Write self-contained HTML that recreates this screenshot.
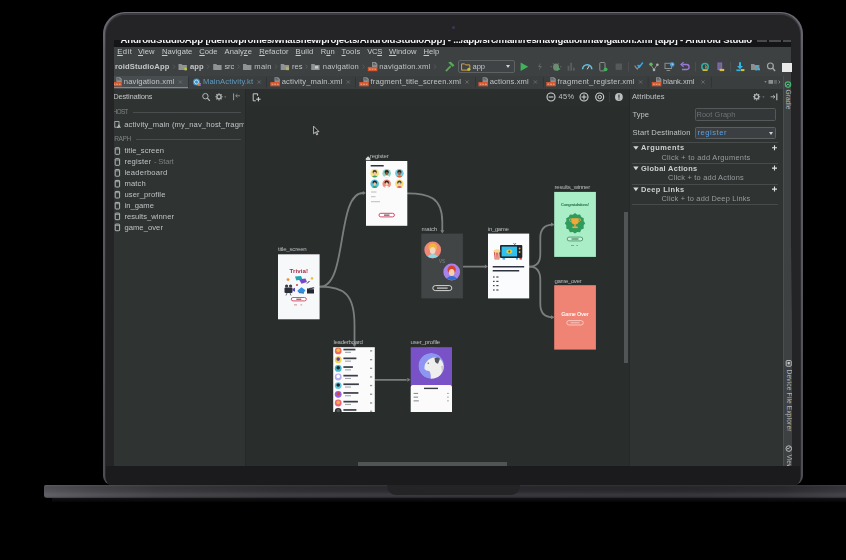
<!DOCTYPE html>
<html><head><meta charset="utf-8"><title>Android Studio</title>
<style>
*{margin:0;padding:0;box-sizing:border-box}
html,body{width:846px;height:560px;overflow:hidden;background:#000000;font-family:"Liberation Sans",sans-serif}
.a{position:absolute}
.t{position:absolute;white-space:pre;line-height:1.24}
.t u{text-decoration-thickness:.6px;text-underline-offset:.8px}
#lid{left:103.4px;top:11.8px;width:699.2px;height:473.2px;border-radius:22px 22px 9px 9px;background:linear-gradient(180deg,#6b6b73 0,#5e5e66 8%,#56565d 55%,#4c4c52 100%)}
#lidmid{left:104.6px;top:13px;width:696.8px;height:472px;border-radius:21px 21px 8.5px 8.5px;background:linear-gradient(180deg,#3c3c41 0,#34343a 10%,#2c2c30 60%,#29292d 100%)}
#lidin{left:106.2px;top:14.8px;width:693.4px;height:471px;border-radius:19.5px 19.5px 8px 8px;background:#242426}
#bez{left:106px;top:466px;width:693.6px;height:20px;background:#1b1b1d;border-radius:0 0 8px 8px}
#base{left:44px;top:485.3px;width:802px;height:13px;border-radius:1.5px 0 0 3px;background:linear-gradient(180deg,rgba(255,255,255,.05) 0,rgba(0,0,0,.08) 15%,rgba(255,255,255,.0) 45%,rgba(255,255,255,.07) 75%,rgba(255,255,255,.05) 88%,rgba(0,0,0,.2) 100%),linear-gradient(90deg,#55555b 0,#47474c 6%,#3a3a3e 14%,#303034 30%,#2b2b2f 50%,#29292d 80%,#2c2c30 92%,#37373d 100%)}
#base2{left:52px;top:498.3px;width:794px;height:3.5px;background:linear-gradient(180deg,#131315,#040405)}
#notch{left:387px;top:485.3px;width:133px;height:9.5px;border-radius:0 0 9px 9px;background:#242427}
#cam{left:451.5px;top:26px;width:3px;height:3px;border-radius:50%;background:#3d3558}
#scr{left:0;top:0;width:846px;height:560px;clip-path:inset(40px 54px 94px 114px)}
#scrin{position:absolute;left:0;top:0;width:846px;height:560px;filter:blur(.32px)}
.r{position:absolute}
svg{position:absolute;overflow:visible}

</style></head>
<body>
<div class="a" id="lid"></div>
<div class="a" id="lidmid"></div>
<div class="a" id="lidin"></div>
<div class="a" id="bez"></div>
<div class="a" id="base2"></div>
<div class="a" id="base"></div>
<div class="a" id="notch"></div>
<div class="a" id="cam"></div>
<div class="a" id="scr"><div id="scrin">
  <!-- backgrounds -->
  <div class="r" style="left:114px;top:40px;width:681px;height:6.5px;background:#141516"></div>
  <div class="r" style="left:114px;top:46.5px;width:681px;height:42px;background:#3d4142"></div>
  <div class="r" style="left:114px;top:76px;width:681px;height:12.5px;background:#3a3e3f"></div>
  <div class="r" style="left:114px;top:76px;width:74px;height:12.5px;background:#484d4f"></div>
  <div class="r" style="left:114px;top:86.6px;width:74px;height:1.6px;background:#4a9ac6"></div>
  <!-- editor toolbar row + canvas -->
  <div class="r" style="left:114px;top:88.5px;width:681px;height:378px;background:#292d2c"></div>
  <div class="r" style="left:245px;top:88.5px;width:385px;height:17.5px;background:#2a2e2d"></div>
  <!-- left panel -->
  <div class="r" style="left:114px;top:88.5px;width:131px;height:378px;background:#2f3332"></div>
  <div class="r" style="left:244.5px;top:88.5px;width:1px;height:378px;background:#262928"></div>
  <!-- right panel -->
  <div class="r" style="left:629.5px;top:88.5px;width:154px;height:378px;background:#2f3332"></div>
  <div class="r" style="left:629px;top:88.5px;width:1px;height:378px;background:#262928"></div>
  <!-- side toolbar -->
  <div class="r" style="left:782.7px;top:76px;width:12.3px;height:391px;background:#3d4142"></div>
  <div class="r" style="left:782.7px;top:76px;width:.8px;height:391px;background:#4a4e4f"></div>
  <div class="r" style="left:790.8px;top:40px;width:1.2px;height:290px;background:linear-gradient(180deg,#1b1b5e 0,#1b1b5e 70%,rgba(27,27,94,0))"></div>
  <div class="r" style="left:756.5px;top:40px;width:10.5px;height:1.6px;background:#4a4a4a"></div><div class="r" style="left:769px;top:40px;width:12px;height:1.6px;background:#4a4a4a"></div><div class="r" style="left:783px;top:40px;width:8px;height:1.6px;background:#4a4a4a"></div>
  <!-- list separators -->
  <div class="r" style="left:133px;top:112.3px;width:108px;height:.8px;background:#4a4e4f"></div>
  <div class="r" style="left:136px;top:139px;width:105px;height:.8px;background:#4a4e4f"></div>
  <!-- right panel fields -->
  <div class="r" style="left:694.5px;top:108px;width:81.5px;height:13.4px;border:1px solid #55595a;border-radius:1.5px;background:#343738"></div>
  <div class="r" style="left:694.5px;top:127.4px;width:81.5px;height:11.6px;border:1px solid #5b5f60;border-radius:1.5px;background:#3b3f41"></div>
  <div class="r" style="left:769px;top:131.6px;width:0;height:0;border-left:2.3px solid transparent;border-right:2.3px solid transparent;border-top:3.2px solid #d0d3d4"></div>
  <div class="r" style="left:632px;top:142px;width:146px;height:.8px;background:#474b4c"></div>
  <div class="r" style="left:632px;top:162.6px;width:146px;height:.8px;background:#474b4c"></div>
  <div class="r" style="left:632px;top:183.5px;width:146px;height:.8px;background:#474b4c"></div>
  <div class="r" style="left:632px;top:204.4px;width:146px;height:.8px;background:#474b4c"></div>
  <!-- scrollbars -->
  <div class="r" style="left:623.6px;top:212px;width:4px;height:151px;background:#515555"></div>
  <div class="r" style="left:357.7px;top:462.3px;width:149.5px;height:3.6px;background:#505454"></div>
  <!-- app dropdown -->
  <div class="r" style="left:458.3px;top:60.4px;width:56.6px;height:12.8px;border:1px solid #5e6263;border-radius:2px;background:#3f4345"></div>
  <div class="r" style="left:505.5px;top:65.4px;width:0;height:0;border-left:2.4px solid transparent;border-right:2.4px solid transparent;border-top:3.2px solid #cfd2d3"></div>
  <!-- white box at toolbar right -->
  <div class="r" style="left:781.7px;top:63px;width:10.3px;height:8.8px;background:#e9e9e9"></div>
<svg width="846" height="560" viewBox="0 0 846 560" style="left:0;top:0"><path d="M178.5,64.10000000000001 h3 l1,1 h4.4 v5 h-8.4z" fill="#8f9394"/><circle cx="185.6" cy="68.9" r="1.5" fill="#b7c63c"/>
<path d="M213.2,64.10000000000001 h3 l1,1 h4.4 v5 h-8.4z" fill="#8f9394"/>
<path d="M243,64.10000000000001 h3 l1,1 h4.4 v5 h-8.4z" fill="#8f9394"/>
<path d="M280.7,64.10000000000001 h3 l1,1 h4.4 v5 h-8.4z" fill="#8f9394"/><path d="M286,67.3h3M286,68.5h3M286,69.7h3" stroke="#cdbb52" stroke-width=".7"/>
<path d="M311.2,64.10000000000001 h3 l1,1 h4.4 v5 h-8.4z" fill="#8f9394"/><rect x="315" y="66.10000000000001" width="3.2" height="2.4" fill="#c9cccc"/>
<path d="M173.1,64.7l1.8,2l-1.8,2" stroke="#5d6162" stroke-width=".8" fill="none"/>
<path d="M207.1,64.7l1.8,2l-1.8,2" stroke="#5d6162" stroke-width=".8" fill="none"/>
<path d="M237.6,64.7l1.8,2l-1.8,2" stroke="#5d6162" stroke-width=".8" fill="none"/>
<path d="M275.1,64.7l1.8,2l-1.8,2" stroke="#5d6162" stroke-width=".8" fill="none"/>
<path d="M305.6,64.7l1.8,2l-1.8,2" stroke="#5d6162" stroke-width=".8" fill="none"/>
<path d="M362.6,64.7l1.8,2l-1.8,2" stroke="#5d6162" stroke-width=".8" fill="none"/>
<path d="M434.1,64.7l1.8,2l-1.8,2" stroke="#5d6162" stroke-width=".8" fill="none"/>
<path d="M372.0,62.1 h3.6 l1.8,1.8 v3.4 h-5.4z" fill="#8d9192"/><path d="M372.8,63.5h2.2M372.8,64.7h3.4" stroke="#3a3e3f" stroke-width=".6"/><rect x="367.8" y="66.9" width="9.6" height="4.3" fill="#d2562e"/><path d="M369.0,69.10000000000001h1.8M371.7,69.10000000000001h1.8M374.40000000000003,69.10000000000001h1.8" stroke="#f3c9b8" stroke-width=".8"/>
<path d="M116.4,77.2 h3.6 l1.8,1.8 v3.4 h-5.4z" fill="#8d9192"/><path d="M117.2,78.6h2.2M117.2,79.8h3.4" stroke="#3a3e3f" stroke-width=".6"/><rect x="112.2" y="82.0" width="9.6" height="4.3" fill="#d2562e"/><path d="M113.4,84.2h1.8M116.10000000000001,84.2h1.8M118.8,84.2h1.8" stroke="#f3c9b8" stroke-width=".8"/>
<path d="M274.5,77.2 h3.6 l1.8,1.8 v3.4 h-5.4z" fill="#8d9192"/><path d="M275.3,78.6h2.2M275.3,79.8h3.4" stroke="#3a3e3f" stroke-width=".6"/><rect x="270.3" y="82.0" width="9.6" height="4.3" fill="#d2562e"/><path d="M271.5,84.2h1.8M274.2,84.2h1.8M276.90000000000003,84.2h1.8" stroke="#f3c9b8" stroke-width=".8"/>
<path d="M363.4,77.2 h3.6 l1.8,1.8 v3.4 h-5.4z" fill="#8d9192"/><path d="M364.2,78.6h2.2M364.2,79.8h3.4" stroke="#3a3e3f" stroke-width=".6"/><rect x="359.2" y="82.0" width="9.6" height="4.3" fill="#d2562e"/><path d="M360.4,84.2h1.8M363.09999999999997,84.2h1.8M365.8,84.2h1.8" stroke="#f3c9b8" stroke-width=".8"/>
<path d="M482.59999999999997,77.2 h3.6 l1.8,1.8 v3.4 h-5.4z" fill="#8d9192"/><path d="M483.4,78.6h2.2M483.4,79.8h3.4" stroke="#3a3e3f" stroke-width=".6"/><rect x="478.4" y="82.0" width="9.6" height="4.3" fill="#d2562e"/><path d="M479.59999999999997,84.2h1.8M482.29999999999995,84.2h1.8M485.0,84.2h1.8" stroke="#f3c9b8" stroke-width=".8"/>
<path d="M550.4000000000001,77.2 h3.6 l1.8,1.8 v3.4 h-5.4z" fill="#8d9192"/><path d="M551.2,78.6h2.2M551.2,79.8h3.4" stroke="#3a3e3f" stroke-width=".6"/><rect x="546.2" y="82.0" width="9.6" height="4.3" fill="#d2562e"/><path d="M547.4000000000001,84.2h1.8M550.1,84.2h1.8M552.8000000000001,84.2h1.8" stroke="#f3c9b8" stroke-width=".8"/>
<path d="M656.0,77.2 h3.6 l1.8,1.8 v3.4 h-5.4z" fill="#8d9192"/><path d="M656.8,78.6h2.2M656.8,79.8h3.4" stroke="#3a3e3f" stroke-width=".6"/><rect x="651.8" y="82.0" width="9.6" height="4.3" fill="#d2562e"/><path d="M653.0,84.2h1.8M655.6999999999999,84.2h1.8M658.4,84.2h1.8" stroke="#f3c9b8" stroke-width=".8"/>
<circle cx="196.5" cy="82" r="3.6" fill="#3a8fc4"/><circle cx="196.5" cy="82" r="2" fill="none" stroke="#cfe6f5" stroke-width=".9"/><path d="M197.8,83 h3 v3 h-3z" fill="#8a6ad8"/><path d="M197.8,86 l3,-3 h-3z" fill="#e8853a"/>
<path d="M178.8,80.4l3.2,3.2M182.0,80.4l-3.2,3.2" stroke="#6d7172" stroke-width=".8"/>
<path d="M257.59999999999997,80.4l3.2,3.2M260.8,80.4l-3.2,3.2" stroke="#6d7172" stroke-width=".8"/>
<path d="M346.7,80.4l3.2,3.2M349.90000000000003,80.4l-3.2,3.2" stroke="#6d7172" stroke-width=".8"/>
<path d="M465.4,80.4l3.2,3.2M468.6,80.4l-3.2,3.2" stroke="#6d7172" stroke-width=".8"/>
<path d="M533.8,80.4l3.2,3.2M537.0,80.4l-3.2,3.2" stroke="#6d7172" stroke-width=".8"/>
<path d="M639.0,80.4l3.2,3.2M642.2,80.4l-3.2,3.2" stroke="#6d7172" stroke-width=".8"/>
<path d="M701.4,80.4l3.2,3.2M704.6,80.4l-3.2,3.2" stroke="#6d7172" stroke-width=".8"/>
<rect x="188.2" y="77" width=".7" height="10.5" fill="#2f3233"/>
<rect x="266" y="77" width=".7" height="10.5" fill="#2f3233"/>
<rect x="355" y="77" width=".7" height="10.5" fill="#2f3233"/>
<rect x="475" y="77" width=".7" height="10.5" fill="#2f3233"/>
<rect x="543" y="77" width=".7" height="10.5" fill="#2f3233"/>
<rect x="647.8" y="77" width=".7" height="10.5" fill="#2f3233"/>
<rect x="711" y="77" width=".7" height="10.5" fill="#2f3233"/>
<path d="M764.3,81.3h2.4l-1.2,1.4z" fill="#9a9d9e"/><rect x="768.5" y="80" width="4.6" height="3.8" fill="#8b8f90"/><rect x="774" y="80" width="3" height="3.8" fill="#5c6061"/><path d="M778.6,80.6l1.4,1.4l-1.4,1.4" stroke="#9a9d9e" stroke-width=".7" fill="none"/>
<path d="M445.3,70.5 l4.8,-5 l1.2,1.2 l-4.8,5z" fill="#5aa85a"/><path d="M448.2,62.6 l2.6,-0.9 l3.6,3.6 l-1.6,1.6z" fill="#5aa85a"/>
<path d="M461.6,63.900000000000006 h3 l1,1 h4.2 v5.2 h-8.2z" fill="none" stroke="#d9a13c" stroke-width="1"/><circle cx="468.8" cy="69.2" r="1.5" fill="#b7c63c"/>
<path d="M520.6,62.5 v8.4 l7.6,-4.2z" fill="#3fb25b"/>
<path d="M540.8,62.7 l-3,4.4 h2 l-1,3.6 l3.2,-4.6 h-2z" fill="#606465"/>
<ellipse cx="556" cy="67.10000000000001" rx="3" ry="3.6" fill="#6f8a72"/><path d="M553,63.300000000000004l1.4,1.4M559,63.300000000000004l-1.4,1.4M551.8,66.7h-1.2M560.2,66.7h1.2" stroke="#7f8384" stroke-width=".8"/><path d="M557,66.7 v4.4 l3.6,-2.2z" fill="#3fb25b"/>
<rect x="567.6" y="65.7" width="1.8" height="5" fill="#5a5e5f"/><rect x="570.3" y="62.7" width="1.8" height="8" fill="#5a5e5f"/><rect x="573" y="67.7" width="1.8" height="3" fill="#5a5e5f"/>
<path d="M582.6,69.3 a4.6,4.6 0 0 1 9.2,0" fill="none" stroke="#5fc4e6" stroke-width="1.5"/><path d="M587.2,69.3 l2,-3.4" stroke="#d9dcdc" stroke-width="1"/>
<rect x="599.8" y="62.5" width="5.2" height="8.4" rx=".8" fill="none" stroke="#8b8f90" stroke-width="1"/><circle cx="605.6" cy="69.3" r="1.9" fill="#3fb25b"/>
<rect x="615.6" y="63.5" width="6.4" height="6.4" fill="#56595a"/>
<rect x="628" y="62" width=".8" height="9.5" fill="#4e5253"/>
<path d="M634.6,65.7 l2.6,3.4 l3,-4" stroke="#8b8f90" stroke-width="1.2" fill="none"/><path d="M637.6,65.10000000000001 l1.8,2 l3.4,-4.6" stroke="#38a8e8" stroke-width="1.5" fill="none"/>
<path d="M651,65.10000000000001 l3,4.6 l3,-4.6" stroke="#8b8f90" stroke-width="1" fill="none"/><circle cx="651" cy="64.3" r="1.7" fill="#62b95c"/><circle cx="657.4" cy="64.7" r="1.3" fill="#a9adae"/><circle cx="654" cy="69.9" r="1.3" fill="#a9adae"/>
<rect x="665" y="63.300000000000004" width="6.6" height="5.2" fill="none" stroke="#8b8f90" stroke-width="1"/><path d="M666.5,70.5h3.6" stroke="#8b8f90" stroke-width="1"/><circle cx="672.2" cy="64.5" r="2.3" fill="#3f9fe0"/><path d="M672.2,63.300000000000004v1.3h1" stroke="#e8f2fa" stroke-width=".6" fill="none"/>
<path d="M682.4,64.5 h4.2 a2.5,2.5 0 0 1 0,5 h-4.6" stroke="#9a79d8" stroke-width="1.3" fill="none"/><path d="M683.6,62.300000000000004 l-2.6,2.2 l2.6,2.2" stroke="#9a79d8" stroke-width="1.2" fill="none"/>
<rect x="695" y="62" width=".8" height="9.5" fill="#4e5253"/>
<circle cx="705" cy="66.7" r="3.2" fill="none" stroke="#2fb1a6" stroke-width="1.5"/><path d="M702.6,70.3 h5" stroke="#d8c23c" stroke-width="1.3"/><path d="M705,65.5 l1.6,1.4 l-1.6,1.4" stroke="#d8c23c" stroke-width=".9" fill="none"/>
<rect x="717.4" y="62.5" width="4.8" height="7.6" fill="#8a62c8"/><rect x="718.4" y="63.5" width="2.8" height="5" fill="#6e6a80"/><rect x="719.6" y="68.9" width="4.6" height="2.2" fill="#d8c23c"/>
<rect x="730" y="62" width=".8" height="9.5" fill="#4e5253"/>
<path d="M740,62.300000000000004 v4.6" stroke="#2fb6e8" stroke-width="2"/><path d="M737,66.10000000000001 h6 l-3,3.2z" fill="#2fb6e8"/><rect x="736.4" y="69.5" width="4" height="1.6" fill="#2fb6e8"/><rect x="740.8" y="69.10000000000001" width="3.6" height="2" fill="#d8c23c"/>
<path d="M751,64.10000000000001 h3 l1,1 h4.4 v5 h-8.4z" fill="#8b8f90"/><rect x="755.4" y="65.9" width="2" height="2" fill="#3fb0e0"/><rect x="758" y="68.3" width="2" height="2" fill="#3fb0e0"/><rect x="755.4" y="68.9" width="2" height="1.6" fill="#3fb0e0"/>
<circle cx="770.4" cy="65.9" r="2.9" fill="none" stroke="#a4a8a9" stroke-width="1.2"/><path d="M772.5,68.10000000000001 l2.6,2.8" stroke="#a4a8a9" stroke-width="1.4"/>
<circle cx="205.4" cy="96.2" r="2.7" fill="none" stroke="#b4b7b8" stroke-width="1"/><path d="M207.4,98.2 l2.4,2.6" stroke="#b4b7b8" stroke-width="1.2"/>
<circle cx="219" cy="96.8" r="2.1" fill="none" stroke="#b4b7b8" stroke-width="1.3"/><path d="M221.40,96.80L222.60,96.80" stroke="#b4b7b8" stroke-width="1.1"/><path d="M220.70,98.50L221.55,99.35" stroke="#b4b7b8" stroke-width="1.1"/><path d="M219.00,99.20L219.00,100.40" stroke="#b4b7b8" stroke-width="1.1"/><path d="M217.30,98.50L216.45,99.35" stroke="#b4b7b8" stroke-width="1.1"/><path d="M216.60,96.80L215.40,96.80" stroke="#b4b7b8" stroke-width="1.1"/><path d="M217.30,95.10L216.45,94.25" stroke="#b4b7b8" stroke-width="1.1"/><path d="M219.00,94.40L219.00,93.20" stroke="#b4b7b8" stroke-width="1.1"/><path d="M220.70,95.10L221.55,94.25" stroke="#b4b7b8" stroke-width="1.1"/>
<path d="M224.1,96.55h2.2l-1.1,1.3z" fill="#8a8e8f"/>
<path d="M233.6,93.39999999999999 v6.8" stroke="#9a9d9e" stroke-width="1"/><path d="M240,95.8 h-4.2 M237.4,94.2 l-1.8,1.6 l1.8,1.6" stroke="#9a9d9e" stroke-width=".8" fill="none"/>
<path d="M253.2,93.8 h4.4 v2 M253.2,93.8 v7 h2.6" stroke="#d5d8d9" stroke-width=".9" fill="none"/><path d="M258.4,97 v4.4 M256.2,99.2 h4.4" stroke="#d5d8d9" stroke-width="1"/>
<circle cx="551" cy="97" r="4" fill="none" stroke="#d0d3d4" stroke-width="1.1"/>
<circle cx="584" cy="97" r="4" fill="none" stroke="#d0d3d4" stroke-width="1.1"/>
<circle cx="599.7" cy="97" r="4" fill="none" stroke="#d0d3d4" stroke-width="1.1"/>
<path d="M548.6,97h4.8" stroke="#d0d3d4" stroke-width="1.1"/><path d="M581.5,97h5M584,94.5v5" stroke="#d0d3d4" stroke-width="1.1"/><circle cx="599.7" cy="97" r="1.7" fill="none" stroke="#d0d3d4" stroke-width="1"/>
<rect x="609" y="92" width=".8" height="10" fill="#3f4344"/>
<circle cx="618.9" cy="97" r="3.9" fill="#bcbfc0"/><rect x="618.4" y="94.6" width="1.1" height="3.2" fill="#2f3233"/><rect x="618.4" y="98.5" width="1.1" height="1.1" fill="#2f3233"/>
<circle cx="756.6" cy="96.8" r="2.1" fill="none" stroke="#b4b7b8" stroke-width="1.3"/><path d="M759.00,96.80L760.20,96.80" stroke="#b4b7b8" stroke-width="1.1"/><path d="M758.30,98.50L759.15,99.35" stroke="#b4b7b8" stroke-width="1.1"/><path d="M756.60,99.20L756.60,100.40" stroke="#b4b7b8" stroke-width="1.1"/><path d="M754.90,98.50L754.05,99.35" stroke="#b4b7b8" stroke-width="1.1"/><path d="M754.20,96.80L753.00,96.80" stroke="#b4b7b8" stroke-width="1.1"/><path d="M754.90,95.10L754.05,94.25" stroke="#b4b7b8" stroke-width="1.1"/><path d="M756.60,94.40L756.60,93.20" stroke="#b4b7b8" stroke-width="1.1"/><path d="M758.30,95.10L759.15,94.25" stroke="#b4b7b8" stroke-width="1.1"/>
<path d="M762.3,96.55h2.2l-1.1,1.3z" fill="#8a8e8f"/>
<path d="M770.6,96.8 h4.4 M773.2,95.2 l1.8,1.6 l-1.8,1.6" stroke="#c3c6c7" stroke-width=".8" fill="none"/><path d="M776.8,93.6 v6.6" stroke="#c3c6c7" stroke-width="1.1"/>
<path d="M633.1999999999999,146.15h5.4l-2.7,3.7z" fill="#d3d6d7"/>
<path d="M772,147.8h5M774.5,145.3v5" stroke="#dfe1e2" stroke-width="1.1"/>
<path d="M633.1999999999999,166.45h5.4l-2.7,3.7z" fill="#d3d6d7"/>
<path d="M772,168.1h5M774.5,165.6v5" stroke="#dfe1e2" stroke-width="1.1"/>
<path d="M633.1999999999999,187.45h5.4l-2.7,3.7z" fill="#d3d6d7"/>
<path d="M772,189.1h5M774.5,186.6v5" stroke="#dfe1e2" stroke-width="1.1"/>
<rect x="114.8" y="121.6" width="4.2" height="5.6" fill="none" stroke="#b9bcbd" stroke-width=".8"/><path d="M117.4,128 l1.5,-3.2 l1.5,3.2 M118,127 h1.8" stroke="#d5d8d9" stroke-width=".7" fill="none"/>
<rect x="115.2" y="147.7" width="4.4" height="6.6" rx=".7" fill="none" stroke="#c3c6c7" stroke-width=".9"/><path d="M115.4,149h4" stroke="#c3c6c7" stroke-width=".7"/>
<rect x="115.2" y="158.7" width="4.4" height="6.6" rx=".7" fill="none" stroke="#c3c6c7" stroke-width=".9"/><path d="M115.4,160h4" stroke="#c3c6c7" stroke-width=".7"/>
<rect x="115.2" y="169.6" width="4.4" height="6.6" rx=".7" fill="none" stroke="#c3c6c7" stroke-width=".9"/><path d="M115.4,170.9h4" stroke="#c3c6c7" stroke-width=".7"/>
<rect x="115.2" y="180.39999999999998" width="4.4" height="6.6" rx=".7" fill="none" stroke="#c3c6c7" stroke-width=".9"/><path d="M115.4,181.7h4" stroke="#c3c6c7" stroke-width=".7"/>
<rect x="115.2" y="191.39999999999998" width="4.4" height="6.6" rx=".7" fill="none" stroke="#c3c6c7" stroke-width=".9"/><path d="M115.4,192.7h4" stroke="#c3c6c7" stroke-width=".7"/>
<rect x="115.2" y="202.39999999999998" width="4.4" height="6.6" rx=".7" fill="none" stroke="#c3c6c7" stroke-width=".9"/><path d="M115.4,203.7h4" stroke="#c3c6c7" stroke-width=".7"/>
<rect x="115.2" y="213.1" width="4.4" height="6.6" rx=".7" fill="none" stroke="#c3c6c7" stroke-width=".9"/><path d="M115.4,214.4h4" stroke="#c3c6c7" stroke-width=".7"/>
<rect x="115.2" y="224.1" width="4.4" height="6.6" rx=".7" fill="none" stroke="#c3c6c7" stroke-width=".9"/><path d="M115.4,225.4h4" stroke="#c3c6c7" stroke-width=".7"/>
<circle cx="788" cy="84.6" r="2.7" fill="none" stroke="#3fb56a" stroke-width="1.2"/><path d="M786.4,85.6 q1.6,-3 3.4,-0.2" stroke="#9fd8b2" stroke-width=".8" fill="none"/>
<text transform="translate(785.6,89.5) rotate(90)" font-size="6.6" fill="#b4b7b8" font-family="Liberation Sans" textLength="20">Gradle</text>
<rect x="786.2" y="360.6" width="5" height="5.6" rx=".8" fill="none" stroke="#c9cccd" stroke-width=".9"/><rect x="787.6" y="362" width="2.2" height="2.4" fill="#c9cccd"/>
<text transform="translate(786.6,369.5) rotate(90)" font-size="6.6" fill="#b4b7b8" font-family="Liberation Sans" textLength="62">Device File Explorer</text>
<circle cx="788.8" cy="448.6" r="2.8" fill="none" stroke="#c9cccd" stroke-width=".9"/><path d="M788.8,448.6 l1.6,-1.6 M788.8,448.6 h-1.8" stroke="#c9cccd" stroke-width=".8"/>
<text transform="translate(786.6,454.5) rotate(90)" font-size="6.6" fill="#b4b7b8" font-family="Liberation Sans">Viewer</text></svg>
<svg width="846" height="560" viewBox="0 0 846 560" style="left:0;top:0"><g fill="none" stroke="#7a7e7e" stroke-width="1.8" stroke-linecap="round">
<path d="M320,286.7 C348,286.7 336,193 363,193"/>
<path d="M320,286.7 C345,286.7 354.5,295 354.5,325 L354.5,345"/>
<path d="M407.5,193.3 C428,193.3 442.3,197 442.3,222 L442.3,231"/>
<path d="M463.5,266.6 L485,266.6"/>
<path d="M529.5,266.6 C537,266.6 540.3,262 540.3,254 L540.3,238 C540.3,228 545,224.6 553,224.6"/>
<path d="M529.5,266.6 C537,266.6 540.3,272 540.3,280 L540.3,304 C540.3,314 545,317.3 553,317.3"/>
<path d="M375.5,379.8 L406,379.8"/>
</g>
<path d="M362.8,191 L366,193 L362.8,195Z" fill="#7a7e7e"/>
<path d="M440.3,230.3 L442.3,233.5 L444.3,230.3Z" fill="#7a7e7e"/>
<path d="M484.8,264.6 L488,266.6 L484.8,268.6Z" fill="#7a7e7e"/>
<path d="M551.0,222.6 L554.2,224.6 L551.0,226.6Z" fill="#7a7e7e"/>
<path d="M551.0,315.3 L554.2,317.3 L551.0,319.3Z" fill="#7a7e7e"/>
<path d="M407.3,377.8 L410.5,379.8 L407.3,381.8Z" fill="#7a7e7e"/>
<path d="M352.5,343.8 L354.5,347 L356.5,343.8Z" fill="#7a7e7e"/>
<rect x="278" y="254.3" width="41.6" height="65" fill="#f7f8fa"/>
<text x="298.8" y="273.4" font-size="6.2" font-weight="700" fill="#ab2b44" text-anchor="middle" font-family="Liberation Sans" textLength="18.5">Trivia!</text>
<circle cx="288" cy="279.6" r="1.4" fill="#f08a2a"/><circle cx="312" cy="278.4" r="1.3" fill="#f2c43c"/><circle cx="297" cy="285" r="1" fill="#d43b3b"/>
<path d="M295,276.5 l6,-0.5 l1.5,3.2 l-6.2,1.3z" fill="#21a5b5"/><path d="M299,279.5 l6.5,-1 l1.5,3.4 l-5.5,1.8z" fill="#7a49c9"/>
<rect x="284.5" y="287.5" width="8" height="5.5" rx="1" fill="#2c2f3a"/><circle cx="286.6" cy="286" r="1.6" fill="#3a3d48"/><circle cx="290.6" cy="286" r="1.6" fill="#3a3d48"/><path d="M292.5,289 l2.5,-1.3 v4 l-2.5,-1.3z" fill="#5b3fb5"/><path d="M287,293 l-1,2.5 M290,293 l1,2.5" stroke="#2c2f3a" stroke-width=".7"/>
<path d="M297.5,290.5 l4,-3.2 l4,3 l-2,2.8 l-5.5,-0.8z" fill="#2f8fe0"/><path d="M299,292.6 l5,0.6" stroke="#174a8a" stroke-width=".8"/>
<rect x="307" y="289.2" width="7" height="4.3" fill="#24262e"/><path d="M307,288.6 l7,-1.6 l0.3,1.3 l-7,1.6z" fill="#24262e"/><path d="M308.5,288.9l1,-1.2M310.7,288.4l1,-1.2M312.8,287.9l1,-1.2" stroke="#fff" stroke-width=".5"/><path d="M307,283.5 l2.5,-2.5" stroke="#24262e" stroke-width="1"/>
<rect x="291.3" y="297.5" width="15" height="3.4" rx="1.7" fill="#fff" stroke="#d0405e" stroke-width="0.9"/>
<rect x="296.3" y="298.7" width="5" height="1" fill="#7a3040"/><rect x="294" y="304.5" width="3" height=".8" fill="#b77"/><rect x="300.5" y="304.5" width="1.6" height=".8" fill="#b77"/>
<rect x="366" y="161" width="41.3" height="64.8" fill="#fbfbfc"/>
<rect x="370.7" y="165" width="13" height="1.5" fill="#30323a"/>
<circle cx="374.7" cy="173.3" r="4.3" fill="#f6e37f"/><circle cx="374.7" cy="172.10" r="2.15" fill="#3d3a36"/><ellipse cx="374.7" cy="173.52" rx="1.42" ry="1.81" fill="#f0c9a5"/><path d="M372.03,176.65 Q374.7,174.16 377.37,176.65 Q374.7,178.25 372.03,176.65Z" fill="#3aa06a"/>
<circle cx="386.7" cy="173.3" r="4.3" fill="#8ed3c0"/><circle cx="386.7" cy="172.10" r="2.15" fill="#1f1f24"/><ellipse cx="386.7" cy="173.52" rx="1.42" ry="1.81" fill="#8a5a3c"/><path d="M384.03,176.65 Q386.7,174.16 389.37,176.65 Q386.7,178.25 384.03,176.65Z" fill="#fff"/>
<circle cx="399.4" cy="173.3" r="4.3" fill="#6fc9e2"/><circle cx="399.4" cy="172.10" r="2.15" fill="#2a2320"/><ellipse cx="399.4" cy="173.52" rx="1.42" ry="1.81" fill="#a8643f"/><path d="M396.73,176.65 Q399.4,174.16 402.07,176.65 Q399.4,178.25 396.73,176.65Z" fill="#e0623a"/>
<circle cx="374.7" cy="183.8" r="4.3" fill="#58bfdb"/><circle cx="374.7" cy="182.60" r="2.15" fill="#1d1b1f"/><ellipse cx="374.7" cy="184.02" rx="1.42" ry="1.81" fill="#f1c7a0"/><path d="M372.03,187.15 Q374.7,184.66 377.37,187.15 Q374.7,188.75 372.03,187.15Z" fill="#2ea06a"/>
<circle cx="386.7" cy="183.8" r="4.3" fill="#f08d78"/><circle cx="386.7" cy="182.60" r="2.15" fill="#2a2526"/><ellipse cx="386.7" cy="184.02" rx="1.42" ry="1.81" fill="#f6d3b8"/><path d="M384.03,187.15 Q386.7,184.66 389.37,187.15 Q386.7,188.75 384.03,187.15Z" fill="#fff"/>
<circle cx="399.4" cy="183.8" r="4.3" fill="#f7e07c"/><circle cx="399.4" cy="182.60" r="2.15" fill="#4a4140"/><ellipse cx="399.4" cy="184.02" rx="1.42" ry="1.81" fill="#f3cfae"/><path d="M396.73,187.15 Q399.4,184.66 402.07,187.15 Q399.4,188.75 396.73,187.15Z" fill="#e85a5a"/>
<rect x="371" y="191.5" width="5.5" height="1" fill="#b9bcc2"/>
<rect x="371" y="196.2" width="4.5" height="1" fill="#b9bcc2"/>
<rect x="371" y="201.2" width="9" height="1" fill="#b9bcc2"/>
<rect x="379.0" y="213.3" width="15.4" height="3.6" rx="1.8" fill="#ffffff" stroke="#d2486a" stroke-width="1.0"/>
<rect x="384" y="214.6" width="5.5" height="1" fill="#4a3038"/>
<path d="M365.8,158.6 l2.3,-2.4 l2.3,2.4 v1.6 h-4.6z" fill="#d5d8d9"/>
<rect x="421.3" y="233.6" width="41.6" height="64.8" fill="#424545"/>
<circle cx="432.7" cy="250" r="8.4" fill="#ef8a78"/><circle cx="432.7" cy="247.65" r="4.20" fill="#f2b63a"/><ellipse cx="432.7" cy="250.42" rx="2.77" ry="3.53" fill="#f5d7bd"/><path d="M427.49,256.55 Q432.7,251.68 437.91,256.55 Q432.7,259.66 427.49,256.55Z" fill="#8fd6e8"/>
<circle cx="451.7" cy="272" r="8.4" fill="#a983ea"/><circle cx="451.7" cy="269.65" r="4.20" fill="#d9442f"/><ellipse cx="451.7" cy="272.42" rx="2.77" ry="3.53" fill="#f3d0b4"/><path d="M446.49,278.55 Q451.7,273.68 456.91,278.55 Q451.7,281.66 446.49,278.55Z" fill="#2f6fd0"/>
<text x="442" y="262.8" font-size="4.6" fill="#7d8182" text-anchor="middle" font-family="Liberation Sans">VS</text>
<rect x="432.8" y="285.6" width="19" height="5" rx="2.5" fill="#3a3c3d" stroke="#e6e8e8" stroke-width="0.9"/>
<rect x="437" y="287.5" width="10.6" height="1.2" fill="#cfd1d1"/>
<rect x="488" y="233.6" width="41.2" height="64.8" fill="#fbfcfd"/>
<path d="M513.5,243 l1.2,1.8 l1.2,-1.8" stroke="#33363f" stroke-width=".6" fill="none"/>
<rect x="500" y="245" width="22.3" height="13" rx="1" fill="#23262e"/><rect x="501.6" y="246.6" width="15.4" height="9.8" fill="#2ec3ee"/><ellipse cx="509.3" cy="251.5" rx="3" ry="2" fill="#f3c534"/><circle cx="509.3" cy="251.5" r="1" fill="#23708a"/><circle cx="519.6" cy="248.5" r=".9" fill="#f2b33a"/><circle cx="519.6" cy="252" r=".9" fill="#f2b33a"/>
<rect x="502.5" y="258" width="2.6" height="1.6" fill="#4aa9d8"/><rect x="516" y="258" width="2" height="1.6" fill="#4aa9d8"/><rect x="519.5" y="258" width="2.4" height="1.6" fill="#d6453f"/>
<path d="M493.8,251.5 h6.4 l-0.9,8 h-4.6z" fill="#d8504a"/><path d="M495.6,251.5 l.5,8 M498.4,251.5 l-.5,8" stroke="#f7e9c8" stroke-width=".9"/><ellipse cx="497" cy="251" rx="3.4" ry="1.7" fill="#f4dc8e"/>
<rect x="492.7" y="266" width="31.5" height="1.5" fill="#2f3340"/><rect x="492.7" y="270" width="26.5" height="1.5" fill="#2f3340"/>
<rect x="493" y="276.4" width="1.6" height="1.2" fill="#444853"/><rect x="496.3" y="276.4" width="2.2" height="1.2" fill="#444853"/>
<rect x="493" y="280.79999999999995" width="1.6" height="1.2" fill="#444853"/><rect x="496.3" y="280.79999999999995" width="2.2" height="1.2" fill="#444853"/>
<rect x="493" y="285.0" width="1.6" height="1.2" fill="#444853"/><rect x="496.3" y="285.0" width="2.2" height="1.2" fill="#444853"/>
<rect x="493" y="289.4" width="1.6" height="1.2" fill="#444853"/><rect x="496.3" y="289.4" width="2.2" height="1.2" fill="#444853"/>
<rect x="554.2" y="191.9" width="41.7" height="65" fill="#aaeec8"/>
<text x="575" y="206" font-size="4.4" font-weight="700" fill="#2c7a4e" text-anchor="middle" font-family="Liberation Sans" textLength="28.5">Congratulations!</text>
<polygon points="585.20,223.30 583.60,225.60 583.83,228.40 581.29,229.59 580.10,232.13 577.30,231.90 575.00,233.50 572.70,231.90 569.90,232.13 568.71,229.59 566.17,228.40 566.40,225.60 564.80,223.30 566.40,221.00 566.17,218.20 568.71,217.01 569.90,214.47 572.70,214.70 575.00,213.10 577.30,214.70 580.10,214.47 581.29,217.01 583.83,218.20 583.60,221.00" fill="#2f9c5d"/>
<path d="M571.3,218.3 h7.4 v2.2 a3.7,4 0 0 1 -7.4,0z" fill="#f2a838"/><path d="M571.3,219 h-1.7 a1.8,2 0 0 0 2.2,2.6 M578.7,219 h1.7 a1.8,2 0 0 1 -2.2,2.6" stroke="#f2a838" stroke-width=".8" fill="none"/><rect x="574.3" y="224.3" width="1.4" height="2.4" fill="#f2a838"/><rect x="572.3" y="226.5" width="5.4" height="1.6" fill="#f2a838"/>
<rect x="567.2" y="237.1" width="15.5" height="3.8" rx="1.9" fill="#c6f3d8" stroke="#3c8a5c" stroke-width="0.8"/>
<rect x="571.5" y="238.5" width="7" height="1" fill="#2d6b47"/><rect x="571" y="245" width="3" height=".8" fill="#5aa47a"/><rect x="576.3" y="245" width="1.6" height=".8" fill="#5aa47a"/>
<rect x="554.2" y="285.2" width="41.7" height="64.4" fill="#f08474"/>
<text x="575" y="315.6" font-size="5.5" font-weight="700" fill="#fdf3f0" text-anchor="middle" font-family="Liberation Sans" textLength="27.5">Game Over</text>
<rect x="566.8" y="320.6" width="16.5" height="4.4" rx="2.2" fill="none" stroke="#fbd5cd" stroke-width="0.8"/>
<rect x="570.5" y="322.3" width="9" height="1" fill="#fbd5cd" opacity=".8"/>
<rect x="333.2" y="347.2" width="41.6" height="64.8" fill="#fbfbfc"/>
<g>
<circle cx="338.2" cy="350.9" r="3.4" fill="#ee6a5e"/><circle cx="338.2" cy="350.29999999999995" r="1.8" fill="#f4c23c"/>
<rect x="343.4" y="348.7" width="12" height="1.7" fill="#3a3d45"/><rect x="345" y="351.79999999999995" width="6" height="1.1" fill="#a3a6ad"/><rect x="370" y="350.2" width="2.2" height="1.3" fill="#8c9097"/>
<circle cx="338.2" cy="359.7" r="3.4" fill="#f5d34a"/><circle cx="338.2" cy="359.09999999999997" r="1.8" fill="#5a3fb0"/>
<rect x="343.4" y="357.5" width="13" height="1.7" fill="#3a3d45"/><rect x="345" y="360.59999999999997" width="6" height="1.1" fill="#a3a6ad"/><rect x="370" y="359.0" width="2.2" height="1.3" fill="#8c9097"/>
<circle cx="338.2" cy="368.4" r="3.4" fill="#43b7c9"/><circle cx="338.2" cy="367.79999999999995" r="1.8" fill="#1d2a33"/>
<rect x="343.4" y="366.2" width="9.5" height="1.7" fill="#3a3d45"/><rect x="345" y="369.29999999999995" width="6" height="1.1" fill="#a3a6ad"/><rect x="370" y="367.7" width="2.2" height="1.3" fill="#8c9097"/>
<circle cx="338.2" cy="377" r="3.4" fill="#b7aef0"/><circle cx="338.2" cy="376.4" r="1.8" fill="#ffffff"/>
<rect x="343.4" y="374.8" width="14.5" height="1.7" fill="#3a3d45"/><rect x="345" y="377.9" width="6" height="1.1" fill="#a3a6ad"/><rect x="370" y="376.3" width="2.2" height="1.3" fill="#8c9097"/>
<circle cx="338.2" cy="385.6" r="3.4" fill="#5ec7e0"/><circle cx="338.2" cy="385.0" r="1.8" fill="#2a2220"/>
<rect x="343.4" y="383.40000000000003" width="15.5" height="1.7" fill="#3a3d45"/><rect x="345" y="386.5" width="6" height="1.1" fill="#a3a6ad"/><rect x="370" y="384.90000000000003" width="2.2" height="1.3" fill="#8c9097"/>
<circle cx="338.2" cy="394.3" r="3.4" fill="#8f62e8"/><circle cx="338.2" cy="393.7" r="1.8" fill="#e0432f"/>
<rect x="343.4" y="392.1" width="15" height="1.7" fill="#3a3d45"/><rect x="345" y="395.2" width="6" height="1.1" fill="#a3a6ad"/><rect x="370" y="393.6" width="2.2" height="1.3" fill="#8c9097"/>
<circle cx="338.2" cy="403" r="3.4" fill="#f0607e"/><circle cx="338.2" cy="402.4" r="1.8" fill="#f2b23a"/>
<rect x="343.4" y="400.8" width="14.5" height="1.7" fill="#3a3d45"/><rect x="345" y="403.9" width="6" height="1.1" fill="#a3a6ad"/><rect x="370" y="402.3" width="2.2" height="1.3" fill="#8c9097"/>
<circle cx="338.2" cy="411.3" r="3.4" fill="#2b2d33"/><circle cx="338.2" cy="410.7" r="1.8" fill="#555"/>
<rect x="343.4" y="409.1" width="13" height="1.7" fill="#3a3d45"/><rect x="345" y="412.2" width="6" height="1.1" fill="#a3a6ad"/><rect x="370" y="410.6" width="2.2" height="1.3" fill="#8c9097"/>
</g>
<rect x="332" y="412" width="44" height="4.5" fill="#292d2c"/>
<rect x="410.7" y="347.2" width="41.3" height="38.2" fill="#7a52c7"/>
<circle cx="431.3" cy="365.8" r="12.9" fill="#8d97f2"/>
<g><path d="M424.5,366.5 q-0.5,-2 2,-4.5 q3,-4.5 8.5,-4.5 q7.5,0.5 8.5,8 q0.8,8 -3,14 h-10 q1,-5 -1.2,-8.5 q-3.5,0 -4.8,-2z" fill="#eeeeef"/><path d="M434.5,358.3 q3,-2 5.5,0.5 l-2,5 q-2.3,-0.5 -3,-2.5z" fill="#55575e"/><path d="M441,366 q2,6 -1,12 h2.5 q2.5,-6 0.8,-12z" fill="#c9c9cd"/><circle cx="428.2" cy="363.2" r=".6" fill="#333"/></g><circle cx="431.3" cy="365.8" r="15.7" fill="none" stroke="#7a52c7" stroke-width="5.6"/>
<path d="M410.7,412 v-24.9 a2,2 0 0 1 2,-2 h37.3 a2,2 0 0 1 2,2 v24.9z" fill="#fbfbfc"/>
<rect x="424" y="387.7" width="14" height="1.4" fill="#3b3e46"/>
<rect x="413.6" y="392.9" width="4.5" height="1.1" fill="#8b8f97"/><rect x="447.3" y="392.9" width="1.3" height="1.1" fill="#8b8f97"/>
<rect x="413.6" y="396.6" width="4.5" height="1.1" fill="#8b8f97"/><rect x="447.3" y="396.6" width="1.3" height="1.1" fill="#8b8f97"/>
<rect x="413.6" y="400.3" width="5.2" height="1.1" fill="#8b8f97"/><rect x="447.3" y="400.3" width="1.3" height="1.1" fill="#8b8f97"/>
<path d="M313.6,126.2 v7.6 l1.8,-1.7 l1.3,2.8 l1.1,-.5 l-1.3,-2.7 h2.5z" fill="#1e1f20" stroke="#e8e8e8" stroke-width=".75" stroke-linejoin="round"/></svg>
<span class="t" style="left:120.5px;top:34.2px;font-size:9.6px;color:#f4f4f4;font-weight:700;letter-spacing:-0.176px;">AndroidStudioApp [/demo/promes/whatsnew/projects/AndroidStudioApp] - .../app/src/main/res/navigation/navigation.xml [app] - Android Studio</span>
<span class="t" style="left:117.2px;top:46.9px;font-size:7.6px;color:#c9cccd;font-weight:400;letter-spacing:0.527px;"><u>E</u>dit</span>
<span class="t" style="left:138.0px;top:46.9px;font-size:7.6px;color:#c9cccd;font-weight:400;letter-spacing:0.068px;"><u>V</u>iew</span>
<span class="t" style="left:161.9px;top:46.9px;font-size:7.6px;color:#c9cccd;font-weight:400;letter-spacing:0.064px;"><u>N</u>avigate</span>
<span class="t" style="left:199.3px;top:46.9px;font-size:7.6px;color:#c9cccd;font-weight:400;letter-spacing:0.011px;"><u>C</u>ode</span>
<span class="t" style="left:224.5px;top:46.9px;font-size:7.6px;color:#c9cccd;font-weight:400;letter-spacing:0.067px;">Analy<u>z</u>e</span>
<span class="t" style="left:259.2px;top:46.9px;font-size:7.6px;color:#c9cccd;font-weight:400;letter-spacing:0.100px;"><u>R</u>efactor</span>
<span class="t" style="left:295.6px;top:46.9px;font-size:7.6px;color:#c9cccd;font-weight:400;letter-spacing:0.202px;"><u>B</u>uild</span>
<span class="t" style="left:320.8px;top:46.9px;font-size:7.6px;color:#c9cccd;font-weight:400;letter-spacing:-0.013px;">R<u>u</u>n</span>
<span class="t" style="left:341.6px;top:46.9px;font-size:7.6px;color:#c9cccd;font-weight:400;letter-spacing:0.233px;"><u>T</u>ools</span>
<span class="t" style="left:367.3px;top:46.9px;font-size:7.6px;color:#c9cccd;font-weight:400;letter-spacing:-0.308px;">VC<u>S</u></span>
<span class="t" style="left:389.0px;top:46.9px;font-size:7.6px;color:#c9cccd;font-weight:400;letter-spacing:0.081px;"><u>W</u>indow</span>
<span class="t" style="left:423.5px;top:46.9px;font-size:7.6px;color:#c9cccd;font-weight:400;letter-spacing:0.069px;"><u>H</u>elp</span>
<span class="t" style="left:114.9px;top:62.0px;font-size:7.6px;color:#c4c7c8;font-weight:700;letter-spacing:0.144px;">roidStudioApp</span>
<span class="t" style="left:190.0px;top:62.0px;font-size:7.6px;color:#c4c7c8;font-weight:700;letter-spacing:0.028px;">app</span>
<span class="t" style="left:224.5px;top:62.0px;font-size:7.6px;color:#c0c3c4;font-weight:400;letter-spacing:-0.208px;">src</span>
<span class="t" style="left:254.3px;top:62.0px;font-size:7.6px;color:#c0c3c4;font-weight:400;letter-spacing:0.258px;">main</span>
<span class="t" style="left:292.0px;top:62.0px;font-size:7.6px;color:#c0c3c4;font-weight:400;letter-spacing:0.013px;">res</span>
<span class="t" style="left:322.8px;top:62.0px;font-size:7.6px;color:#c0c3c4;font-weight:400;letter-spacing:0.147px;">navigation</span>
<span class="t" style="left:379.2px;top:62.0px;font-size:7.6px;color:#c0c3c4;font-weight:400;letter-spacing:0.197px;">navigation.xml</span>
<span class="t" style="left:472.5px;top:62.0px;font-size:7.6px;color:#c0c3c4;font-weight:400;letter-spacing:-0.057px;">app</span>
<span class="t" style="left:123.8px;top:77.3px;font-size:7.6px;color:#c0c3c4;font-weight:400;letter-spacing:0.154px;">navigation.xml</span>
<span class="t" style="left:203.0px;top:77.3px;font-size:7.6px;color:#5e9bc0;font-weight:400;letter-spacing:0.155px;">MainActivity.kt</span>
<span class="t" style="left:281.7px;top:77.3px;font-size:7.6px;color:#c0c3c4;font-weight:400;letter-spacing:0.164px;">activity_main.xml</span>
<span class="t" style="left:370.6px;top:77.3px;font-size:7.6px;color:#c0c3c4;font-weight:400;letter-spacing:0.138px;">fragment_title_screen.xml</span>
<span class="t" style="left:489.8px;top:77.3px;font-size:7.6px;color:#c0c3c4;font-weight:400;letter-spacing:0.092px;">actions.xml</span>
<span class="t" style="left:557.6px;top:77.3px;font-size:7.6px;color:#c0c3c4;font-weight:400;letter-spacing:0.194px;">fragment_register.xml</span>
<span class="t" style="left:663.0px;top:77.3px;font-size:7.6px;color:#c0c3c4;font-weight:400;letter-spacing:-0.064px;">blank.xml</span>
<span class="t lp" style="left:113.3px;top:92.1px;font-size:7.6px;color:#c0c3c4;font-weight:400;letter-spacing:-0.233px;max-width:131.2px;overflow:hidden;">Destinations</span>
<span class="t lp" style="left:112.5px;top:108.3px;font-size:6.6px;color:#7f8384;font-weight:400;letter-spacing:-0.707px;max-width:132.0px;overflow:hidden;">HOST</span>
<span class="t lp" style="left:124.2px;top:119.9px;font-size:7.6px;color:#c0c3c4;font-weight:400;letter-spacing:0.122px;max-width:120.3px;overflow:hidden;">activity_main (my_nav_host_fragment)</span>
<span class="t lp" style="left:109.5px;top:135.1px;font-size:6.6px;color:#7f8384;font-weight:400;letter-spacing:-0.391px;max-width:135.0px;overflow:hidden;">GRAPH</span>
<span class="t lp" style="left:124.4px;top:146.3px;font-size:7.6px;color:#c0c3c4;font-weight:400;letter-spacing:0.063px;max-width:120.1px;overflow:hidden;">title_screen</span>
<span class="t lp" style="left:124.4px;top:157.3px;font-size:7.6px;color:#c0c3c4;font-weight:400;letter-spacing:0.221px;max-width:120.1px;overflow:hidden;">register</span>
<span class="t lp" style="left:124.4px;top:168.2px;font-size:7.6px;color:#c0c3c4;font-weight:400;letter-spacing:0.234px;max-width:120.1px;overflow:hidden;">leaderboard</span>
<span class="t lp" style="left:124.4px;top:179.0px;font-size:7.6px;color:#c0c3c4;font-weight:400;letter-spacing:0.182px;max-width:120.1px;overflow:hidden;">match</span>
<span class="t lp" style="left:124.4px;top:190.0px;font-size:7.6px;color:#c0c3c4;font-weight:400;letter-spacing:0.118px;max-width:120.1px;overflow:hidden;">user_profile</span>
<span class="t lp" style="left:124.4px;top:201.0px;font-size:7.6px;color:#c0c3c4;font-weight:400;letter-spacing:0.066px;max-width:120.1px;overflow:hidden;">in_game</span>
<span class="t lp" style="left:124.4px;top:211.7px;font-size:7.6px;color:#c0c3c4;font-weight:400;letter-spacing:0.045px;max-width:120.1px;overflow:hidden;">results_winner</span>
<span class="t lp" style="left:124.4px;top:222.7px;font-size:7.6px;color:#c0c3c4;font-weight:400;letter-spacing:0.067px;max-width:120.1px;overflow:hidden;">game_over</span>
<span class="t lp" style="left:154.0px;top:157.3px;font-size:7.6px;color:#7b7f80;font-weight:400;letter-spacing:-0.170px;max-width:90.5px;overflow:hidden;">- Start</span>
<span class="t" style="left:558.6px;top:92.4px;font-size:7.4px;color:#c0c3c4;font-weight:400;letter-spacing:0.368px;">45%</span>
<span class="t" style="left:632.0px;top:92.1px;font-size:7.6px;color:#c0c3c4;font-weight:400;letter-spacing:0.042px;">Attributes</span>
<span class="t" style="left:632.6px;top:109.9px;font-size:7.6px;color:#c0c3c4;font-weight:400;letter-spacing:-0.017px;">Type</span>
<span class="t" style="left:696.5px;top:110.0px;font-size:7.4px;color:#6f7374;font-weight:400;letter-spacing:0.078px;">Root Graph</span>
<span class="t" style="left:632.6px;top:128.2px;font-size:7.6px;color:#c0c3c4;font-weight:400;letter-spacing:0.103px;">Start Destination</span>
<span class="t" style="left:697.5px;top:128.2px;font-size:7.6px;color:#5c9fe0;font-weight:400;letter-spacing:0.521px;">register</span>
<span class="t" style="left:641.0px;top:143.2px;font-size:7.4px;color:#cfd2d3;font-weight:700;letter-spacing:0.498px;">Arguments</span>
<span class="t" style="left:661.5px;top:152.8px;font-size:7.4px;color:#9a9d9e;font-weight:400;letter-spacing:0.276px;">Click + to add Arguments</span>
<span class="t" style="left:641.0px;top:163.5px;font-size:7.4px;color:#cfd2d3;font-weight:700;letter-spacing:0.330px;">Global Actions</span>
<span class="t" style="left:668.0px;top:173.1px;font-size:7.4px;color:#9a9d9e;font-weight:400;letter-spacing:0.233px;">Click + to add Actions</span>
<span class="t" style="left:641.0px;top:184.5px;font-size:7.4px;color:#cfd2d3;font-weight:700;letter-spacing:0.406px;">Deep Links</span>
<span class="t" style="left:661.5px;top:194.1px;font-size:7.4px;color:#9a9d9e;font-weight:400;letter-spacing:0.199px;">Click + to add Deep Links</span>
<span class="t" style="left:369.8px;top:152.4px;font-size:6.1px;color:#b9bcbc;font-weight:400;letter-spacing:-0.191px;">register</span>
<span class="t" style="left:278.0px;top:245.4px;font-size:6.1px;color:#b9bcbc;font-weight:400;letter-spacing:-0.223px;">title_screen</span>
<span class="t" style="left:421.5px;top:224.8px;font-size:6.1px;color:#b9bcbc;font-weight:400;letter-spacing:-0.222px;">match</span>
<span class="t" style="left:488.0px;top:224.6px;font-size:6.1px;color:#b9bcbc;font-weight:400;letter-spacing:-0.413px;">in_game</span>
<span class="t" style="left:554.5px;top:183.4px;font-size:6.1px;color:#b9bcbc;font-weight:400;letter-spacing:-0.271px;">results_winner</span>
<span class="t" style="left:554.5px;top:276.6px;font-size:6.1px;color:#b9bcbc;font-weight:400;letter-spacing:-0.444px;">game_over</span>
<span class="t" style="left:333.5px;top:338.0px;font-size:6.1px;color:#b9bcbc;font-weight:400;letter-spacing:-0.321px;">leaderboard</span>
<span class="t" style="left:410.5px;top:338.0px;font-size:6.1px;color:#b9bcbc;font-weight:400;letter-spacing:-0.195px;">user_profile</span>
</div></div>

</body></html>
